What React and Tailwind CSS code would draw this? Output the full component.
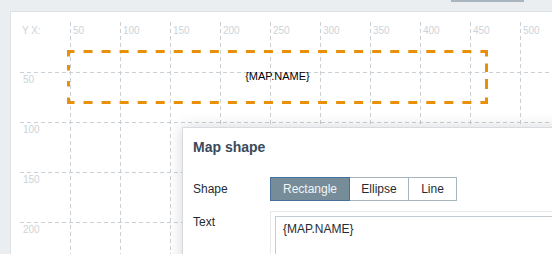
export default function App() {
  const xs = [0, 1, 2, 3, 4, 5, 6, 7, 8, 9];
  const ys = [0, 1, 2, 3];
  const xLabels = ["50", "100", "150", "200", "250", "300", "350", "400", "450", "500"];
  const yLabels = ["50", "100", "150", "200"];
  return (
    <div className="w-[552px] h-[254px] bg-[#ebeef0] overflow-hidden flex flex-col font-['Liberation_Sans',Arial,sans-serif]">
      <div className="h-[11px] shrink-0 flex justify-end items-start">
        <div className="w-[73px] h-[2px] bg-[#a9b6bf] mr-[28px]" />
      </div>
      <div className="flex-1 ml-[10px] bg-white border-t border-l border-[#dde2e6] relative">
        <svg className="absolute left-0 top-0" width="541" height="242">
          {xs.map((k) => (
            <line key={"v" + k} x1={59.5 + 50 * k} x2={59.5 + 50 * k} y1="10" y2="242" stroke="#c9d1d7" strokeWidth="1" strokeDasharray="4 3" />
          ))}
          {ys.map((k) => (
            <line key={"h" + k} x1="9" x2="541" y1={60.5 + 50 * k} y2={60.5 + 50 * k} stroke="#c9d1d7" strokeWidth="1" strokeDasharray="4 3" />
          ))}
        </svg>
        <div className="absolute left-[11px] top-[13px] text-[10px] leading-[12px] text-[#ccd4da]">Y X:</div>
        {xLabels.map((l, i) => (
          <div key={l} className="absolute top-[13px] text-[10px] leading-[12px] text-[#ccd4da]" style={{ left: 62 + 50 * i }}>
            {l}
          </div>
        ))}
        {yLabels.map((l, i) => (
          <div key={"y" + l} className="absolute left-[12px] text-[10px] leading-[12px] text-[#ccd4da]" style={{ top: 62 + 50 * i }}>
            {l}
          </div>
        ))}
        <div className="absolute left-[56px] top-[38px] w-[421px] h-[54px] flex items-center justify-center">
          <svg className="absolute left-0 top-0" width="421" height="54">
            <line x1="0" x2="421" y1="1.5" y2="1.5" stroke="#e8900a" strokeWidth="3" strokeDasharray="9 9.04" strokeDashoffset="1.5" />
            <line x1="0" x2="421" y1="52.5" y2="52.5" stroke="#e8900a" strokeWidth="3" strokeDasharray="9 9.04" strokeDashoffset="1.5" />
            <line x1="1.5" x2="1.5" y1="0" y2="54" stroke="#e8900a" strokeWidth="3" strokeDasharray="6.5 8.5 5.5 10.5 5.5 11 6.5 100" />
            <line x1="419.5" x2="419.5" y1="0" y2="54" stroke="#e8900a" strokeWidth="3" strokeDasharray="6.5 7 8.5 7 10 8.5 6.5 100" />
          </svg>
          <span className="relative text-[11px] leading-[12px] text-black -mt-[2px]">{"{MAP.NAME}"}</span>
        </div>

        <div className="absolute left-[171px] top-[115px] -right-[20px] -bottom-[20px] bg-white border border-[#d5dbe0] shadow-[0_0_14px_rgba(0,0,0,0.16)] pl-[10px] pt-[11px]">
          <div className="text-[14px] leading-[16px] font-bold text-[#384a5c]">Map shape</div>
          <div className="mt-[22px] flex items-center">
            <div className="w-[77px] text-[12px] leading-[14px] text-[#1f2c33]">Shape</div>
            <div className="flex h-[24px]">
              <div className="w-[80px] h-full flex items-center justify-center bg-[#768c98] border border-[#46709a] text-[12px] text-[#f2f4f5]">Rectangle</div>
              <div className="w-[59px] h-full flex items-center justify-center bg-white border-y border-r border-[#a7b5bd] text-[12px] text-[#1f2c33]">Ellipse</div>
              <div className="w-[48px] h-full flex items-center justify-center bg-white border-y border-r border-[#a7b5bd] text-[12px] text-[#1f2c33]">Line</div>
            </div>
          </div>
          <div className="mt-[10px] flex items-start">
            <div className="w-[77px] pt-[4px] text-[12px] leading-[14px] text-[#1f2c33]">Text</div>
            <div className="flex-1 h-[60px] border-t border-l border-[#e6eaed] pl-[4px] pt-[4px]">
              <div className="h-full border border-[#c3ccd2] px-[7px] pt-[5px] text-[12px] leading-[14px] text-[#1f2c33]">{"{MAP.NAME}"}</div>
            </div>
          </div>
        </div>
      </div>
    </div>
  );
}
